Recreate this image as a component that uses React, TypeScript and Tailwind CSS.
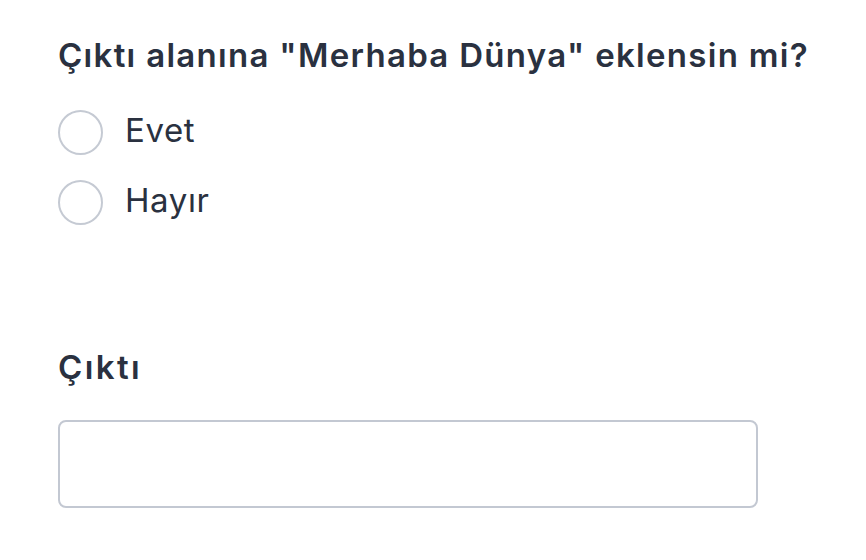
import React from 'react';

export default function App() {
  const options = ['Evet', 'Hayır'];
  return (
    <div className="min-h-[560px] bg-white pl-[58px] pt-[35px] text-[#2a3140]" style={{ fontFamily: 'Inter, "Noto Sans", sans-serif' }}>
      <h2 className="text-[33px] leading-[40px] font-semibold tracking-[1.3px]">Çıktı alanına "Merhaba Dünya" eklensin mi?</h2>
      <div className="mt-[35px] flex flex-col gap-[25px]">
        {options.map((o) => (
          <label key={o} className="flex items-center gap-[22px]">
            <span className="h-[45px] w-[45px] shrink-0 rounded-full border-2 border-[#c5cad3] bg-white" />
            <span className="text-[33px] leading-[40px] tracking-[0.6px] -mt-[5px]">{o}</span>
          </label>
        ))}
      </div>
      <h3 className="mt-[122px] text-[33px] leading-[40px] font-semibold tracking-[2.4px]">Çıktı</h3>
      <div className="mt-[33px] h-[88px] w-[700px] rounded-[8px] border-2 border-[#c3c8d2] bg-white" />
    </div>
  );
}
